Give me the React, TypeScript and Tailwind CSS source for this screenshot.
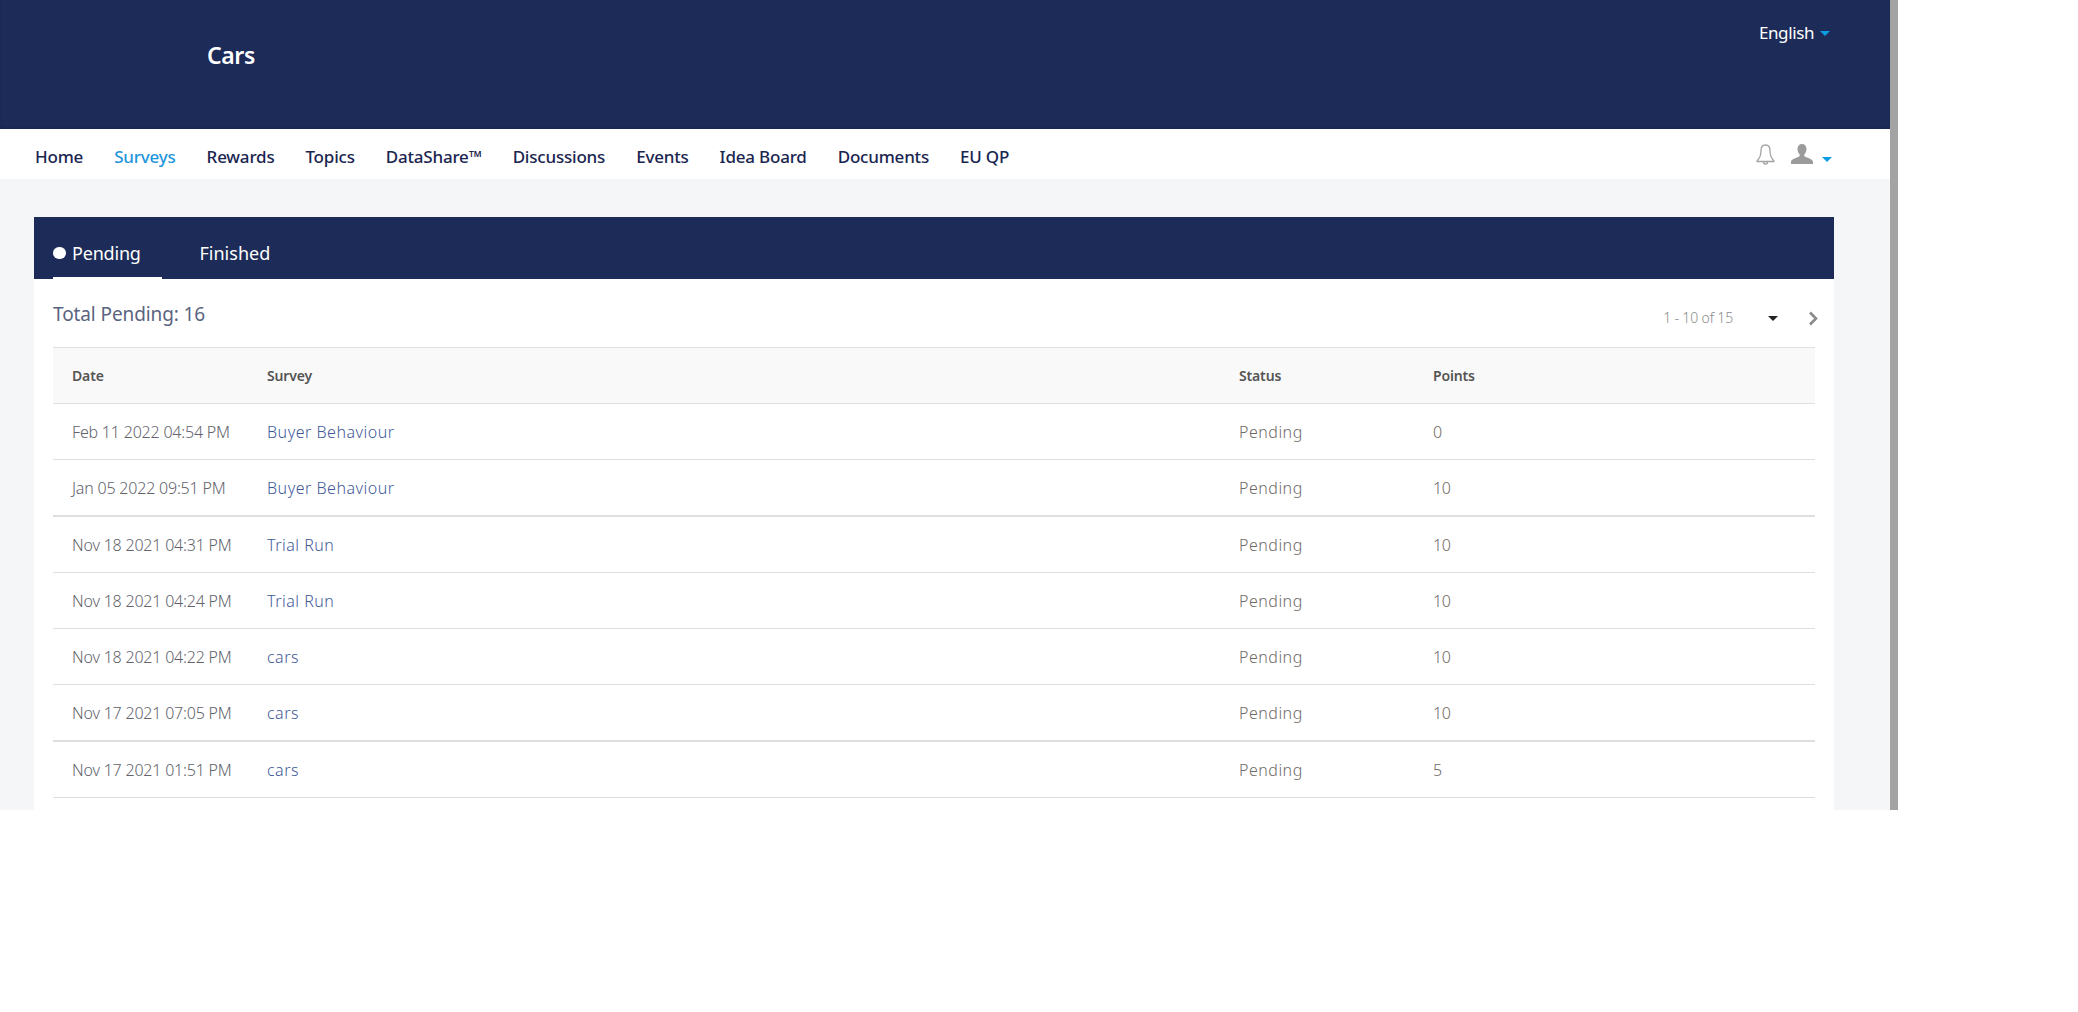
const rows = [
  ["Feb 11 2022 04:54 PM", "Buyer Behaviour", "0", false],
  ["Jan 05 2022 09:51 PM", "Buyer Behaviour", "10", true],
  ["Nov 18 2021 04:31 PM", "Trial Run", "10", false],
  ["Nov 18 2021 04:24 PM", "Trial Run", "10", false],
  ["Nov 18 2021 04:22 PM", "cars", "10", false],
  ["Nov 17 2021 07:05 PM", "cars", "10", true],
  ["Nov 17 2021 01:51 PM", "cars", "5", false],
] as const;
const nav = ["Home", "Surveys", "Rewards", "Topics", "DataShare™", "Discussions", "Events", "Idea Board", "Documents", "EU QP"];

function Caret({ className }: { className: string }) {
  return (
    <svg width="10" height="5" viewBox="0 0 10 5" className={className}>
      <path d="M0 0h10L5 5z" fill="currentColor" />
    </svg>
  );
}

function Row({ r }: { r: (typeof rows)[number] }) {
  const line = r[3] ? "h-[57px] border-b-2 border-[#dedede]" : "h-[56px] border-b border-[#dedede]";
  return (
    <tr className="text-[16px] font-light">
      <td className={`${line} pl-[19px] tracking-[-0.2px] text-[#62636c]`}>{r[0]}</td>
      <td className={`${line} pl-[19px] tracking-[0.5px] text-[#3f5a99]`}>{r[1]}</td>
      <td className={`${line} pl-[19px] tracking-[0.5px] text-[#6f6a66]`}>Pending</td>
      <td className={`${line} pl-[19px] tracking-[-0.5px] text-[#6f6a66]`}>{r[2]}</td>
    </tr>
  );
}

export default function App() {
  return (
    <div className="flex h-[810px] w-[1898px] overflow-hidden bg-[#f5f6f8] font-['Noto_Sans',sans-serif]">
      <div className="w-[1890px] shrink-0">
        <header className="flex h-[129px] items-start justify-between bg-[#1c2b57] pl-[207px] pr-[60px] shadow-[inset_0_-2px_2px_rgba(0,0,0,0.08)]">
          <h1 className="mt-[38px] text-[23px] font-semibold leading-[34px] tracking-[-0.4px] text-white">Cars</h1>
          <div className="mt-[21px] flex items-center gap-[6px] text-[17px] leading-6 tracking-[-0.4px] text-white">
            English
            <Caret className="text-[#0e9de5]" />
          </div>
        </header>
        <nav className="flex h-[50px] items-center justify-between bg-white pl-[35px] pr-[58px]">
          <ul className="flex gap-[31px] pt-[5px]">
            {nav.map((n) => (
              <li key={n} className={`text-[17px] font-medium leading-6 tracking-[-0.2px] ${n === "Surveys" ? "text-[#1e96dc]" : "text-[#1a2550]"}`}>
                {n}
              </li>
            ))}
          </ul>
          <div className="flex items-center">
            <svg width="19" height="21" viewBox="0 0 19 21" fill="none" stroke="#a3a3a3" strokeWidth="1.3">
              <path d="M9.5 1C6.3 1 5 3.6 5 6.5c0 4-1 7-3 9.300-.8.900-1.300 1.700-1 1.700h17c.3 0-.2-.8-1-1.700-2-2.300-3-5.300-3-9.300C14 3.600 12.700 1 9.500 1z" />
              <path d="M7.500 18c0 1.300.9 2 2 2s2-.7 2-2" />
            </svg>
            <svg width="22" height="20" viewBox="0 0 22 20" className="ml-[16px]">
              <path d="M11 0c2.800 0 4.500 2 4.500 5 0 2.200-.9 4-2 5.200-.5.6-.3 1.800.4 2.300 2 1.300 8.100 2.200 8.100 5.500v2H0v-2c0-3.300 6.100-4.200 8.100-5.500.7-.5.9-1.700.4-2.300C7.400 9 6.500 7.200 6.500 5 6.500 2 8.200 0 11 0z" fill="#9b9b9b" />
            </svg>
            <Caret className="ml-[9px] mt-[10px] text-[#0e9de5]" />
          </div>
        </nav>
        <main className="px-[34px] pt-[38px]">
          <div className="h-[700px] w-[1800px] bg-white">
            <div className="flex h-[62px] items-end gap-[37.5px] bg-[#1c2b57] pl-[19px]">
              <div className="flex h-[48px] w-[109px] items-start gap-[6px] border-b-2 border-white pt-[10px] text-[18px] leading-6 tracking-[-0.2px] text-white">
                <span className="mt-[6px] h-[12px] w-[13px] rounded-full bg-white" />
                Pending
              </div>
              <div className="h-[48px] pt-[10px] text-[18px] leading-6 tracking-[0px] text-white">Finished</div>
            </div>
            <div className="flex items-start justify-between pl-[19px] pr-[15px]">
              <div className="pt-[22px] text-[19px] leading-[27px] tracking-[-0.1px] text-[#5a6480]">Total Pending: 16</div>
              <div className="flex items-center pt-[29px] text-[14px] leading-5 tracking-[-0.15px] text-[#8b8b8b]">
                <span className="font-light">1 - 10 of 15</span>
                <Caret className="ml-[35px] text-[#222222]" />
                <svg width="11" height="15" viewBox="0 0 11 15" fill="none" className="ml-[30px]">
                  <path d="M2 1.500l6 6-6 6" stroke="#8a8a8a" strokeWidth="2.600" />
                </svg>
              </div>
            </div>
            <div className="px-[19px] pt-[19px]">
              <table className="w-[1762px] table-fixed border-separate border-spacing-0">
                <colgroup>
                  <col className="w-[195px]" />
                  <col className="w-[972px]" />
                  <col className="w-[194px]" />
                  <col />
                </colgroup>
                <thead>
                  <tr className="bg-[#f9f9f9] text-left text-[14px] tracking-[-0.15px] text-[#555555]">
                    <th className="h-[57px] border-y border-[#e0e0e0] pl-[19px] font-semibold">Date</th>
                    <th className="h-[57px] border-y border-[#e0e0e0] pl-[19px] font-semibold">Survey</th>
                    <th className="h-[57px] border-y border-[#e0e0e0] pl-[19px] font-semibold">Status</th>
                    <th className="h-[57px] border-y border-[#e0e0e0] pl-[19px] font-semibold">Points</th>
                  </tr>
                </thead>
                <tbody>
                  {rows.map((r) => (
                    <Row key={r[0]} r={r} />
                  ))}
                </tbody>
              </table>
            </div>
          </div>
        </main>
      </div>
      <div className="w-[8px] bg-[#a3a3a3]" />
    </div>
  );
}
